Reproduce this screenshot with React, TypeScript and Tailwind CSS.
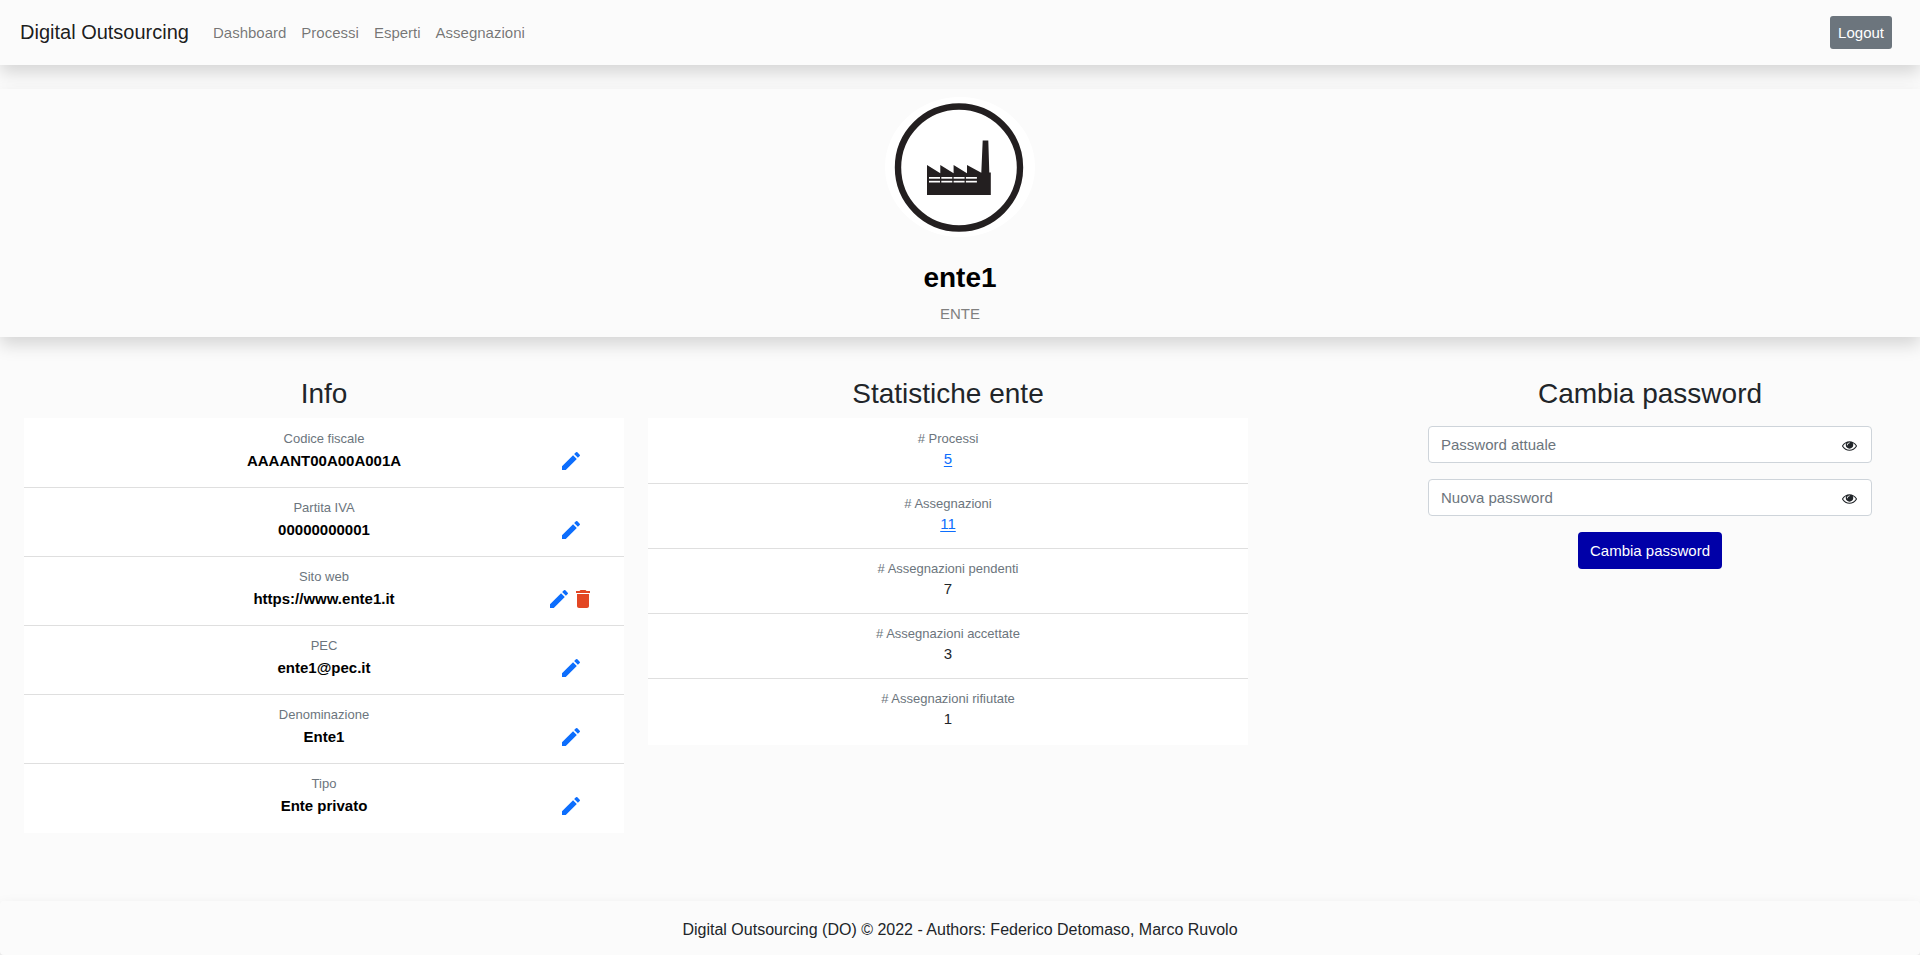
import React, { useState } from "react";
import { MdDelete, MdEdit } from "react-icons/md";

type InfoItem = { label: string; value: string; removable?: boolean };
type StatItem = { label: string; value: number; href?: string };

const navLinks = ["Dashboard", "Processi", "Esperti", "Assegnazioni"];

const infoItems: InfoItem[] = [
  { label: "Codice fiscale", value: "AAAANT00A00A001A" },
  { label: "Partita IVA", value: "00000000001" },
  { label: "Sito web", value: "https://www.ente1.it", removable: true },
  { label: "PEC", value: "ente1@pec.it" },
  { label: "Denominazione", value: "Ente1" },
  { label: "Tipo", value: "Ente privato" },
];

const statItems: StatItem[] = [
  { label: "# Processi", value: 5, href: "#processi" },
  { label: "# Assegnazioni", value: 11, href: "#assegnazioni" },
  { label: "# Assegnazioni pendenti", value: 7 },
  { label: "# Assegnazioni accettate", value: 3 },
  { label: "# Assegnazioni rifiutate", value: 1 },
];

function EyeIcon() {
  return (
    <svg viewBox="0 0 1792 1792" className="size-[15px]" fill="currentColor" aria-hidden="true">
      <path d="M1664 960q-152-236-381-353 61 104 61 225 0 185-131.5 316.5t-316.5 131.5-316.5-131.5-131.5-316.5q0-121 61-225-229 117-381 353 133 205 333.5 326.5t434.5 121.5 434.5-121.5 333.5-326.5zm-720-384q0-20-14-34t-34-14q-125 0-214.5 89.5t-89.5 214.5q0 20 14 34t34 14 34-14 14-34q0-86 61-147t147-61q20 0 34-14t14-34zm848 384q0 34-20 69-140 230-376.5 368.5t-499.5 138.5-499.5-139-376.5-368q-20-35-20-69t20-69q140-229 376.5-368t499.5-139 499.5 139 376.5 368q20 35 20 69z" />
    </svg>
  );
}

function FactoryAvatar() {
  return (
    <svg viewBox="0 0 150 140" className="h-[140px] w-[150px]" role="img" aria-label="ente1">
      <ellipse cx="75" cy="70" rx="75" ry="70" fill="#ffffff" />
      <circle cx="74" cy="70.5" r="61" fill="none" stroke="#231f20" strokeWidth="6.4" />
      <path
        d="M42 68 L55.3 76.3 V68 L68.6 76.3 V68 L82 76.3 V68 L96.3 75.8 L97.7 43.5 H103.3 L104.3 75.5 H105.8 V98 H42 Z"
        fill="#231f20"
      />
      <g fill="#ffffff">
        {[44, 56.3, 68.6, 80.9].map((x) => (
          <React.Fragment key={x}>
            <rect x={x} y="80" width="11" height="1.7" />
            <rect x={x} y="83.8" width="11" height="1.7" />
          </React.Fragment>
        ))}
      </g>
    </svg>
  );
}

function PasswordField({ label }: { label: string }) {
  const [visible, setVisible] = useState(false);
  return (
    <div className="flex h-[37px] w-full items-center rounded border border-[#ced4da] bg-white">
      <input
        type={visible ? "text" : "password"}
        placeholder={label}
        aria-label={label}
        className="min-w-0 flex-1 bg-transparent pl-3 outline-none placeholder:text-[#6c757d] placeholder:opacity-100"
      />
      <button
        type="button"
        aria-label="Mostra password"
        onClick={() => setVisible(!visible)}
        className="pt-0.5 pr-[14px] pl-2"
      >
        <EyeIcon />
      </button>
    </div>
  );
}

export default function App() {
  return (
    <div className="flex min-h-screen flex-col bg-[#fbfbfb] font-['Liberation_Sans',Arial,sans-serif] text-[15px] leading-[22px] text-[#212529]">
      <nav className="flex h-[65px] items-center bg-[#fbfbfb] pr-7 pl-5 shadow-[0_8px_16px_rgba(0,0,0,0.15)]">
        <a href="#home" className="mr-6 pb-0.5 text-xl leading-[30px] text-black/90">
          Digital Outsourcing
        </a>
        <ul className="flex gap-[15px] text-black/55">
          {navLinks.map((name) => (
            <li key={name}>
              <a href={`#${name.toLowerCase()}`}>{name}</a>
            </li>
          ))}
        </ul>
        <button type="button" className="ml-auto h-[33px] rounded-[3px] bg-[#6c757d] px-2 text-white">
          Logout
        </button>
      </nav>

      <header className="relative mt-6 flex flex-col items-center bg-[#fbfbfb] pt-2 pb-3 shadow-[0_8px_16px_rgba(0,0,0,0.15)]">
        <FactoryAvatar />
        <h1 className="mt-6 text-[28px] leading-[34px] font-bold text-black">ente1</h1>
        <p className="mt-2 text-[#808080]">ENTE</p>
      </header>

      <main className="grid grow grid-cols-3 items-start px-6 pt-10 pb-[68px] text-center">
        <section className="pr-6">
          <h2 className="mb-2 text-[28px] leading-[33px]">Info</h2>
          <ul className="divide-y divide-[#dfdfdf] bg-white pt-px">
            {infoItems.map((item) => (
              <li key={item.label} className="h-[69px] pt-[10px]">
                <p className="text-[13px] leading-5 text-[#6c757d]">{item.label}</p>
                <div className="grid grid-cols-[106px_1fr_106px] items-center">
                  <strong className="col-start-2 text-black">{item.value}</strong>
                  <span className="flex justify-center">
                    <button type="button" aria-label={`Modifica ${item.label}`} className="text-[#0d6efd]">
                      <MdEdit className="size-6" />
                    </button>
                    {item.removable && (
                      <button type="button" aria-label={`Elimina ${item.label}`} className="text-[#e34724]">
                        <MdDelete className="size-6" />
                      </button>
                    )}
                  </span>
                </div>
              </li>
            ))}
          </ul>
        </section>

        <section className="pr-6">
          <h2 className="mb-2 text-[28px] leading-[33px]">Statistiche ente</h2>
          <ul className="divide-y divide-[#dfdfdf] bg-white py-px">
            {statItems.map((item) => (
              <li key={item.label} className="h-[65px] pt-[10px]">
                <p className="text-[13px] leading-5 text-[#6c757d]">{item.label}</p>
                <p className="leading-5">
                  {item.href ? (
                    <a href={item.href} className="text-[#0d6efd] underline underline-offset-2">
                      {item.value}
                    </a>
                  ) : (
                    item.value
                  )}
                </p>
              </li>
            ))}
          </ul>
        </section>

        <section className="ml-auto w-3/4 pr-6">
          <h2 className="mb-4 text-[28px] leading-[33px]">Cambia password</h2>
          <form className="flex flex-col items-center gap-4" onSubmit={(e) => e.preventDefault()}>
            <PasswordField label="Password attuale" />
            <PasswordField label="Nuova password" />
            <button type="submit" className="h-[37px] rounded bg-[#0000a8] px-3 text-white">
              Cambia password
            </button>
          </form>
        </section>
      </main>

      <footer className="rounded bg-[#fbfbfb] pt-[17px] pb-[13px] text-center text-base shadow-[0_8px_16px_rgba(0,0,0,0.15)]">
        Digital Outsourcing (DO) © 2022 - Authors: Federico Detomaso, Marco Ruvolo
      </footer>
    </div>
  );
}
